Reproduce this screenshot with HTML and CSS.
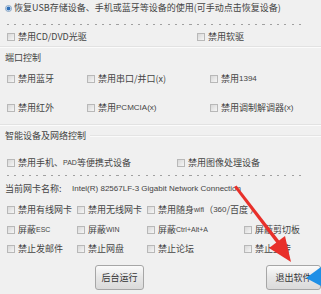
FILE: index.html
```html
<!DOCTYPE html>
<html lang="zh-CN">
<head>
<meta charset="utf-8">
<link rel="stylesheet" href="styles.css">
</head>
<body>
<div class="panel">
  <div class="row radio-row"><span class="radio"></span><span class="lbl">恢复USB存储设备、手机或蓝牙等设备的使用(可手动点击恢复设备)</span></div>
  <div class="dots d1"></div>
  <div class="row grid g-cd">
    <label class="cb"><span class="box"></span>禁用CD/DVD光驱</label>
    <label class="cb"><span class="box"></span>禁用软驱</label>
  </div>
  <div class="etch e1"></div>
  <div class="row head">端口控制</div>
  <div class="row grid g-port r-port1">
    <label class="cb"><span class="box"></span>禁用蓝牙</label>
    <label class="cb"><span class="box"></span>禁用串口/并口(x)</label>
    <label class="cb"><span class="box"></span>禁用<span class="lat">1394</span></label>
  </div>
  <div class="row grid g-port r-port2">
    <label class="cb"><span class="box"></span>禁用红外</label>
    <label class="cb"><span class="box"></span>禁用<span class="lat">PCMCIA(x)</span></label>
    <label class="cb"><span class="box"></span>禁用调制解调器<span class="lat">(x)</span></label>
  </div>
  <div class="etch e2"></div>
  <div class="row head head2"><span>智能设备及网络控制</span><span class="hline"></span></div>
  <div class="row grid g-smart">
    <label class="cb"><span class="box"></span>禁用手机、<span class="lat sm">PAD</span>等便携式设备</label>
    <label class="cb"><span class="box"></span>禁用图像处理设备</label>
  </div>
  <div class="dots d2"></div>
  <div class="row nic"><span class="nic-l">当前网卡名称:</span><span class="nic-v">Intel(R) 82567LF-3 Gigabit Network Connection</span></div>
  <div class="row grid g-net n1">
    <label class="cb"><span class="box"></span>禁用有线网卡</label>
    <label class="cb"><span class="box"></span>禁用无线网卡</label>
    <label class="cb"><span class="box"></span>禁用随身<span class="lat sm">wifi</span>（<span class="lat">360</span>/百度 ）</label>
  </div>
  <div class="row grid g-net n2">
    <label class="cb"><span class="box"></span>屏蔽<span class="lat sm">ESC</span></label>
    <label class="cb"><span class="box"></span>屏蔽<span class="lat sm">WIN</span></label>
    <label class="cb"><span class="box"></span>屏蔽<span class="lat sm">Ctrl+Alt+A</span></label>
    <label class="cb"><span class="box"></span>屏蔽剪切板</label>
  </div>
  <div class="row grid g-net n3">
    <label class="cb"><span class="box"></span>禁止发邮件</label>
    <label class="cb"><span class="box"></span>禁止网盘</label>
    <label class="cb"><span class="box"></span>禁止论坛</label>
    <label class="cb"><span class="box"></span>禁止上传</label>
  </div>
  <div class="btns">
    <button class="btn b-bg">后台运行</button>
    <button class="btn b-exit">退出软件</button>
  </div>
  <svg class="overlay" width="321" height="294" viewBox="0 0 321 294">
    <polygon points="234,187 236.5,185.5 281,243 278,245" fill="#e8302a"/>
    <polygon points="291,262 269,248 285,236" fill="#e8302a"/>
    <polygon points="306,278 321,267 321,286" fill="#1e8fe6"/>
  </svg>
</div>
</body>
</html>
```

FILE: styles.css
```css
html, body {
  margin: 0;
  padding: 0;
}
body {
  width: 321px;
  height: 294px;
  overflow: hidden;
  background: #f0f0f0;
  font-family: "Noto Sans CJK SC", "Noto Sans", sans-serif;
  font-size: 9px;
  color: #444;
}
.panel {
  position: relative;
  width: 321px;
  height: 294px;
  display: flex;
  flex-direction: column;
}
.row {
  height: 16px;
  display: flex;
  align-items: center;
  line-height: 16px;
  white-space: nowrap;
}
.radio-row {
  padding-left: 5px;
}
.radio {
  width: 5px;
  height: 5px;
  border-radius: 50%;
  border: 1px solid #8aa6c4;
  background: radial-gradient(circle, #2f6fb8 0 1.6px, #cfe0f2 2.2px);
  margin-right: 2px;
}
.lat {
  font-family: "Liberation Sans", sans-serif;
  font-size: 8px;
}
.lat.sm {
  font-size: 7px;
}
.dots {
  height: 1px;
  margin-left: 7px;
  width: 294px;
  background: repeating-linear-gradient(90deg, #a0a0a0 0 2px, transparent 2px 7.3px);
}
.d1 { margin-top: 8px; }
.d2 { margin-top: 4px; }
.grid {
  display: grid;
  padding-left: 7px;
}
.g-cd { grid-template-columns: 190px auto; margin-top: 4px; }
.g-port { grid-template-columns: 80px 123px auto; }
.r-port1 { margin-top: 5px; }
.r-port2 { margin-top: 13px; }
.g-smart { grid-template-columns: 170px auto; margin-top: 11px; }
.g-net { grid-template-columns: 70px 70px 97px auto; }
.n1 { margin-top: 5px; }
.n2 { margin-top: 4px; }
.n3 { margin-top: 3px; }
.cb {
  display: flex;
  align-items: center;
}
.box {
  width: 6px;
  height: 6px;
  border: 1px solid #b8b8b8;
  background: linear-gradient(135deg, #d8d8d8, #f6f6f6);
  margin-right: 3px;
  flex: none;
}
.etch {
  height: 1px;
  border-top: 1px solid #e2e2e2;
  background: #fbfbfb;
}
.e1 { margin-top: 1px; }
.e2 { margin-top: 8px; }
.head {
  padding-left: 5px;
  margin-top: 2px;
}
.head2 {
  margin-top: 2px;
}
.hline {
  flex: 1;
  height: 1px;
  margin-left: 4px;
  background: #e4e4e4;
  border-bottom: 1px solid #fafafa;
}
.nic {
  padding-left: 5px;
  margin-top: 5px;
}
.nic-l {
  width: 67px;
}
.nic-v {
  font-family: "Liberation Sans", sans-serif;
  font-size: 8px;
}
.btns {
  display: flex;
  margin-top: 8px;
  padding-left: 95px;
  gap: 122px;
}
.btn {
  height: 25px;
  border: 1px solid #a6a6a6;
  border-radius: 3px;
  background: linear-gradient(#fbfbfb, #e6e6e6 50%, #dadada);
  font-family: "Noto Sans CJK SC", sans-serif;
  font-size: 9px;
  color: #333;
  padding: 0;
}
.b-bg { width: 53px; }
.b-exit { width: 60px; }
.overlay {
  position: absolute;
  left: 0;
  top: 0;
}
```
